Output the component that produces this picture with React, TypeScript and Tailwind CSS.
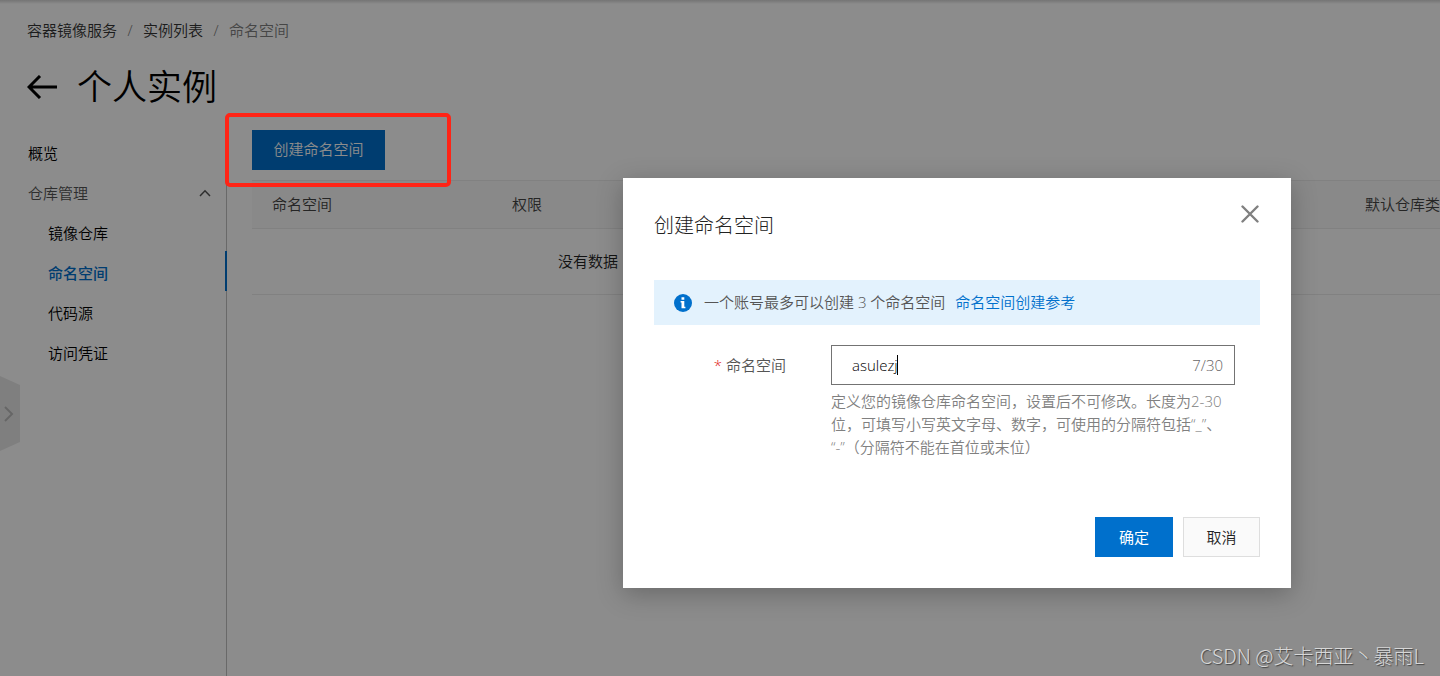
import { useState } from "react";

type MenuItem = {
  label: string;
  active?: boolean;
};

const repositoryMenu: MenuItem[] = [
  { label: "镜像仓库" },
  { label: "命名空间", active: true },
  { label: "代码源" },
  { label: "访问凭证" }
];

const MAX_LENGTH = 30;

function Breadcrumb() {
  return (
    <nav className="flex h-6 items-center text-[15px] leading-6 text-[#333]">
      <a href="#services">容器镜像服务</a>
      <span className="w-[26px] text-center text-[#777]">/</span>
      <a href="#instances">实例列表</a>
      <span className="w-[26px] text-center text-[#777]">/</span>
      <span className="text-[#808080]">命名空间</span>
    </nav>
  );
}

function Sidebar() {
  return (
    <aside className="w-[227px] shrink-0 border-r border-[#c0c0c0] pt-3 text-[15px] leading-[44px] text-black">
      <a href="#overview" className="block h-10 pl-7">
        概览
      </a>
      <button
        type="button"
        className="flex h-10 w-full items-start justify-between pr-[15px] pl-7 text-[#555]"
      >
        仓库管理
        <svg width="12" height="8" viewBox="0 0 12 8" fill="none" className="mt-[18px]" aria-hidden="true">
          <path d="M1 7l5-5.2L11 7" stroke="#555" strokeWidth="1.5" />
        </svg>
      </button>
      {repositoryMenu.map((item) => (
        <a
          key={item.label}
          href={`#${item.label}`}
          className={
            item.active
              ? "-mr-px block h-10 border-r-2 border-[#0070cc] pl-12 font-medium text-[#0070cc]"
              : "block h-10 pl-12"
          }
        >
          {item.label}
        </a>
      ))}
    </aside>
  );
}

function NamespaceTable() {
  return (
    <table className="mt-[10px] w-full table-fixed border-collapse text-left text-[15px] leading-6">
      <colgroup>
        <col className="w-[240px]" />
        <col />
        <col className="w-[95px]" />
      </colgroup>
      <thead>
        <tr className="h-12 border-y border-[#ebebeb] bg-[#f9f9f9] text-[#444]">
          <th className="pb-[2px] pl-5 font-[350]">命名空间</th>
          <th className="pb-[2px] pl-5 font-[350]">权限</th>
          <th className="pb-[2px] pl-5 font-[350] whitespace-nowrap">默认仓库类</th>
        </tr>
      </thead>
      <tbody>
        <tr className="h-[66px] border-b border-[#ebebeb] text-[#222]">
          <td colSpan={3} className="pb-[2px]">
            <div className="w-[672px] text-center">没有数据</div>
          </td>
        </tr>
      </tbody>
    </table>
  );
}

function CreateNamespaceDialog() {
  const [name, setName] = useState("asulezj");

  return (
    <form
      role="dialog"
      aria-labelledby="dialog-title"
      className="w-[668px] bg-white px-[31px] pt-6 pb-[31px] text-[15px] text-[#555] shadow-[0_6px_24px_rgba(0,0,0,0.25)]"
      onSubmit={(event) => event.preventDefault()}
    >
      <div className="flex items-start justify-between">
        <h2 id="dialog-title" className="pt-2 text-xl leading-8 font-light text-[#222]">
          创建命名空间
        </h2>
        <button type="button" aria-label="关闭" className="flex size-5 items-center justify-center pt-1">
          <svg width="18" height="18" viewBox="0 0 18 18" fill="none" className="shrink-0" aria-hidden="true">
            <path d="M1.5 1.5l15 15m0-15l-15 15" stroke="#808080" strokeWidth="2.4" strokeLinecap="round" />
          </svg>
        </button>
      </div>

      <div className="mt-[38px] flex h-[45px] items-center bg-[#e3f2fd] pl-5">
        <svg width="18" height="18" viewBox="0 0 18 18" aria-hidden="true">
          <circle cx="9" cy="9" r="9" fill="#0070cc" />
          <path d="M7.5 3.2h2.8v2.5H7.5zM6.6 7h3.7v5.8h1.1v1.5H7.5V8.5h-.9z" fill="#fff" />
        </svg>
        <span className="ml-3">一个账号最多可以创建 3 个命名空间</span>
        <a href="#guide" className="ml-[10px] text-[#0070cc]">
          命名空间创建参考
        </a>
      </div>

      <div className="mt-5 flex pr-[25px]">
        <label htmlFor="namespace" className="w-[132px] shrink-0 text-right leading-10">
          <span className="mr-1 text-[#e02020]">*</span>命名空间
        </label>
        <div className="ml-[45px] min-w-0 flex-1">
          <div className="relative">
            <input
              id="namespace"
              type="text"
              value={name}
              maxLength={MAX_LENGTH}
              onChange={(event) => setName(event.target.value)}
              className="h-10 w-full border border-[#737373] bg-white pr-16 pl-5 text-black outline-none"
            />
            <span className="absolute top-[10px] left-[66px] h-5 w-px bg-black" />
            <span className="absolute top-0 right-3 leading-10 text-[#666]">
              {name.length}/{MAX_LENGTH}
            </span>
          </div>
          <p className="mt-[5px] leading-[23px] text-[#808080] [text-spacing-trim:space-all]">
            定义您的镜像仓库命名空间，设置后不可修改。长度为2-30位，可填写小写英文字母、数字，可使用的分隔符包括“_”、
            <wbr />
            “-”（分隔符不能在首位或末位）
          </p>
        </div>
      </div>

      <div className="mt-[58px] flex justify-end gap-[10px]">
        <button type="submit" className="h-10 w-[78px] bg-[#0070cc] font-normal text-white">
          确定
        </button>
        <button type="button" className="h-10 w-[77px] border border-[#dedede] bg-[#fafafa] text-[#222]">
          取消
        </button>
      </div>
    </form>
  );
}

export default function App() {
  return (
    <div className="relative flex min-h-screen flex-col overflow-hidden bg-white font-['Open_Sans','Noto_Sans_CJK_SC',sans-serif] font-[350]">
      <div className="h-1 bg-linear-to-b from-[#d4d4d4] to-white" />
      <header className="px-[27px] pt-[14px]">
        <Breadcrumb />
        <div className="mt-[17px] flex h-14 items-center gap-5">
          <a href="#back" aria-label="返回">
            <svg width="30" height="24" viewBox="0 0 30 24" fill="none" aria-hidden="true">
              <path d="M13 1L2 12l11 11M2 12h28" stroke="#000" strokeWidth="3" />
            </svg>
          </a>
          <h1 className="text-[35px] leading-[56px] font-[350] text-black">个人实例</h1>
        </div>
      </header>

      <div className="flex flex-1 pt-1">
        <Sidebar />
        <main className="min-w-0 flex-1 pt-[11px] pl-[25px]">
          <button type="button" className="h-10 w-[133px] bg-[#0070cc] pb-[2px] text-[15px] text-white">
            创建命名空间
          </button>
          <NamespaceTable />
        </main>
      </div>

      <button
        type="button"
        aria-label="展开"
        className="absolute top-[376px] left-0 flex h-[75px] w-5 items-center justify-center bg-[#e8e8e8] [clip-path:polygon(0_0,100%_12%,100%_88%,0_100%)]"
      >
        <svg width="12" height="16" viewBox="0 0 12 16" fill="none" aria-hidden="true">
          <path d="M1 1l7 7-7 7" stroke="#bbb" strokeWidth="2" />
        </svg>
      </button>

      <div className="absolute inset-0 flex items-start justify-end bg-black/45 pt-[178px] pr-[149px]">
        <CreateNamespaceDialog />
      </div>

      <div className="absolute top-[113px] left-[225px] h-[74px] w-[226px] rounded-[5px] border-4 border-[#ff2416]" />

      <p className="absolute right-4 bottom-1 font-['Noto_Sans_CJK_SC',sans-serif] text-xl leading-8 font-light text-[#d8d8d8] [text-shadow:1px_1px_1px_#444]">
        CSDN @艾卡西亚丶暴雨L
      </p>
    </div>
  );
}
